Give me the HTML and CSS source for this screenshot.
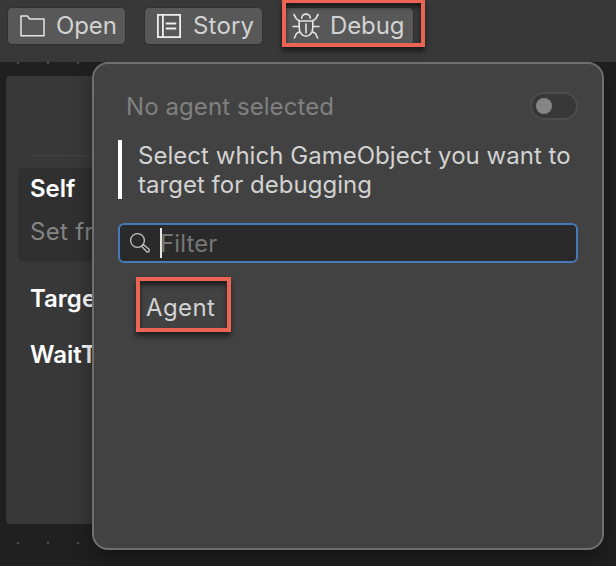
FILE: index.html
```html
<!DOCTYPE html>
<html lang="en">
<head>
<meta charset="utf-8">
<title>Debug</title>
<link rel="stylesheet" href="styles.css">
</head>
<body>
<header class="toolbar">
  <button class="btn open">
    <svg width="26" height="24" viewBox="0 0 26 24"><path d="M2 2h6.500l2.200 3H25V21.700H2z" fill="none" stroke="#e4e4e4" stroke-width="1.500" stroke-linejoin="round"/></svg>
    <span>Open</span>
  </button>
  <button class="btn story">
    <svg width="26" height="26" viewBox="0 0 26 26" fill="none" stroke="#eee" stroke-width="1.8"><path d="M1.900 1.900h22.200v22.200H1.900zM6.900 2v22"/><path d="M10.500 10.500h9M10.500 15.500h9" stroke-linecap="round"/></svg>
    <span>Story</span>
  </button>
  <button class="btn debug">
    <svg width="28" height="28" viewBox="0 0 28 28" fill="none" stroke="#e4e4e4" stroke-width="1.6" stroke-linecap="round"><path d="M7.2 9h13.6v6.5c0 5-3 8.8-6.800 8.800s-6.800-3.800-6.800-8.800zM9.700 6.200C9.700 .7 18.300 .7 18.300 6.200M14 12v9M7 8.500 4.400 7 2 2.500M21 8.500 23.600 7 26 2.500M7 14.500H1M21 14.500H27M8 19.500 4.500 21.500 2.400 26M20 19.500 23.500 21.500 25.600 26"/></svg>
    <span>Debug</span>
    <i class="mark mark-debug"></i>
  </button>
</header>
<main class="canvas">
  <section class="card">
    <div class="card-head"></div>
    <div class="field">
      <div class="name">Self</div>
      <div class="value">Set from</div>
    </div>
    <div class="name row">Target</div>
    <div class="name row">WaitTi</div>
  </section>
</main>
<aside class="popup">
  <div class="status">
    <span>No agent selected</span>
    <span class="toggle"></span>
  </div>
  <p class="info">Select which GameObject you want to target for debugging</p>
  <div class="search">
    <svg width="22" height="22" viewBox="0 0 22 22" fill="none" stroke="#c4c4c4" stroke-width="1.3"><circle cx="8.500" cy="8.500" r="6.900"/><path d="M12.500 14.300 14.300 12.500 20.300 17.500Q20.500 20.300 18 20z" stroke-linejoin="round"/></svg>
    <span class="caret"></span>
    <span class="hint">Filter</span>
  </div>
  <div class="agent">Agent</div>
</aside>
</body>
</html>
```

FILE: styles.css
```css
* { box-sizing: border-box; }
body {
  margin: 0;
  width: 616px;
  height: 566px;
  overflow: hidden;
  position: relative;
  background: #202020;
  color: #d2d2d2;
  font: 24px/29px Inter, "Liberation Sans", sans-serif;
}
.toolbar {
  height: 62px;
  padding: 7px;
  display: flex;
  align-items: flex-start;
  gap: 18px;
  background: #383838;
}
.btn {
  position: relative;
  height: 38px;
  padding: 0 0 1px 11px;
  display: flex;
  align-items: center;
  border: 1px solid #303030;
  border-radius: 5px;
  background: #585858;
  color: #d2d2d2;
  font: inherit;
}
.btn svg { flex: none; }
.open { width: 119px; }
.open span { margin-left: 11px; letter-spacing: -.1px; }
.story { width: 119px; }
.story span { margin-left: 11px; letter-spacing: .2px; }
.debug { width: 133px; padding-left: 10px; }
.debug span { margin-left: 10px; letter-spacing: -.1px; }
.mark {
  position: absolute;
  border: 4px solid #ec6554;
  box-shadow: 0 4px 5px rgba(0,0,0,.55), inset 0 4px 5px rgba(0,0,0,.55);
}
.mark-debug { left: 0; top: -9px; width: 143px; height: 48px; }
.canvas {
  height: 504px;
  padding: 14px 0 0 6px;
  background: conic-gradient(from 270deg at 2px 2px, #4a4a4a 90deg, transparent 0) 17px 0 / 30px 30px repeat, #202020;
}
.card {
  width: 140px;
  height: 448px;
  background: #383838;
  border-radius: 4px;
  overflow: hidden;
}
.card-head {
  height: 80px;
  margin-left: 24px;
  border-bottom: 1px solid #424242;
}
.field {
  height: 94px;
  margin: 12px 0 0 12px;
  padding: 6px 12px;
  border-radius: 5px;
  background: #303030;
}
.name { font-weight: 600; color: #fff; }
.value { margin-top: 14px; color: #858585; letter-spacing: .3px; }
.row { margin: 22px 0 0 24px; }
.row + .row { margin-top: 27px; }
.popup {
  position: absolute;
  left: 92px;
  top: 62px;
  width: 512px;
  height: 488px;
  padding: 24px 24px 0;
  border: 2px solid #6f6f6f;
  border-radius: 16px;
  background: #424242;
  box-shadow: 0 8px 20px rgba(0,0,0,.38);
  clip-path: inset(0 -40px -40px -40px);
}
.status {
  height: 36px;
  padding-left: 8px;
  display: flex;
  align-items: center;
  justify-content: space-between;
  color: #808080;
  letter-spacing: .08px;
}
.toggle {
  width: 48px;
  height: 28px;
  padding: 4px;
  border: 2px solid #4c4c4c;
  border-radius: 14px;
  background: #383838;
}
.toggle::before {
  content: "";
  display: block;
  width: 16px;
  height: 16px;
  border-radius: 50%;
  background: #858585;
}
.info {
  width: 460px;
  height: 59px;
  margin: 16px 0 0;
  padding: 1px 0 0 16px;
  border-left: 4px solid #fff;
  letter-spacing: .03px;
}
.search {
  height: 40px;
  margin-top: 24px;
  padding-left: 9px;
  display: flex;
  align-items: center;
  border: 2px solid #4879b8;
  border-radius: 6px;
  background: #2a2a2a;
}
.caret { width: 2px; height: 30px; margin-left: 9px; background: #e8e8e8; }
.hint { margin-left: -2px; color: #767676; letter-spacing: .1px; }
.agent {
  width: 95px;
  height: 55px;
  margin: 14px 0 0 18px;
  padding-left: 6px;
  border: 4px solid #ec6554;
  line-height: 53px;
  letter-spacing: .4px;
  box-shadow: 0 4px 5px rgba(0,0,0,.55), inset 0 4px 5px rgba(0,0,0,.55);
}
```
